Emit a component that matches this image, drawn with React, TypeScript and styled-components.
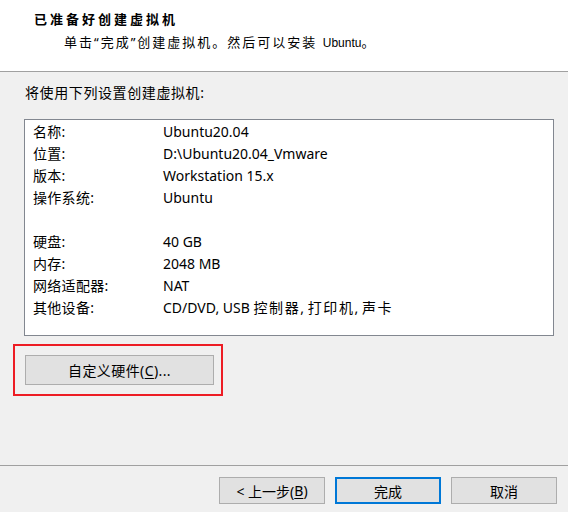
import React from 'react';
import styled, { createGlobalStyle } from 'styled-components';

const GlobalStyle = createGlobalStyle`
    html, body {
        margin: 0;
        padding: 0;
        background: #f0f0f0;
    }
    body {
        font-family: "Noto Sans", "Noto Sans CJK SC", sans-serif;
        color: #000;
    }
`;

interface ISetting {
    label: string;
    value: React.ReactNode;
}

// CJK runs are a bit wider in the original than Noto's 1em advance
const Han = styled.span<{ $ls?: number }>`
    letter-spacing: ${p => p.$ls ?? 0.6}px;
`;

const settings: (ISetting | null)[] = [
    { label: '名称:', value: 'Ubuntu20.04' },
    { label: '位置:', value: 'D:\\Ubuntu20.04_Vmware' },
    { label: '版本:', value: 'Workstation 15.x' },
    { label: '操作系统:', value: 'Ubuntu' },
    null,
    { label: '硬盘:', value: '40 GB' },
    { label: '内存:', value: '2048 MB' },
    { label: '网络适配器:', value: 'NAT' },
    {
        label: '其他设备:',
        value: (
            <>
                CD/DVD, USB <Han $ls={1.6}>控制器</Han>, <Han $ls={1.6}>打印机</Han>, <Han $ls={1.6}>声卡</Han>
            </>
        ),
    },
];

const Window = styled.div`
    display: flex;
    flex-direction: column;
    width: 568px;
    height: 512px;
    overflow: hidden;
    font-size: 14px;
`;

const Header = styled.div`
    height: 71px;
    background: #fff;
    border-bottom: 1px solid #a0a0a0;
`;

const Title = styled.div`
    padding: 8px 0 0 34px;
    height: 22px;
    line-height: 22px;
    font-size: 13px;
    font-weight: 700;
    letter-spacing: 3px;
`;

const Subtitle = styled.div`
    padding: 1px 0 0 64px;
    height: 22px;
    line-height: 22px;
    font-size: 13px;
    letter-spacing: 2px;
`;

const SmallLatin = styled.span`
    font-family: "Liberation Sans", Arial, sans-serif;
    font-size: 12px;
    letter-spacing: 0;
`;

const Main = styled.div`
    flex: 1;
    display: flex;
    flex-direction: column;
    padding: 10px 14px 0 24px;
`;

const Intro = styled.div`
    padding-left: 1px;
    height: 22px;
    line-height: 22px;
    margin-bottom: 15px;
`;

const SummaryBox = styled.div`
    height: 214px;
    background: #fff;
    border: 1px solid #828790;
    padding: 1px 0 0 8px;
`;

const Row = styled.div`
    display: grid;
    grid-template-columns: 130px 1fr;
    height: 22px;
    line-height: 22px;
    white-space: nowrap;
`;

const Label = styled.span`
    letter-spacing: 0.3px;
`;

const Highlight = styled.div`
    box-sizing: border-box;
    align-self: flex-start;
    margin: 8px 0 0 -11px;
    width: 210px;
    height: 52px;
    border: 2px solid #ed1c24;
    padding: 9px 0 0 10px;
`;

const Button = styled.button<{ $primary?: boolean }>`
    box-sizing: border-box;
    display: flex;
    align-items: center;
    justify-content: center;
    margin: 0;
    padding: 0;
    background: #e1e1e1;
    border: ${p => (p.$primary ? '2px solid #0078d7' : '1px solid #adadad')};
    font-family: "Noto Sans", "Noto Sans CJK SC", sans-serif;
    font-size: 14px;
    color: #000;
    white-space: pre;

    u {
        text-underline-offset: 2px;
    }
`;

const CustomButton = styled(Button)`
    width: 189px;
    height: 30px;
    letter-spacing: 0.4px;
`;

const Footer = styled.div`
    height: 47px;
    border-top: 1px solid #a0a0a0;
    display: flex;
    justify-content: flex-end;
    gap: 10px;
    padding: 11px 11px 0 0;
    box-sizing: border-box;
`;

const FooterButton = styled(Button)`
    width: 106px;
    height: 27px;
`;

const App = () => {
    return (
        <Window>
            <GlobalStyle />
            <Header>
                <Title>已准备好创建虚拟机</Title>
                <Subtitle>
                    单击“完成”创建虚拟机。然后可以安装 <SmallLatin>Ubuntu</SmallLatin>。
                </Subtitle>
            </Header>
            <Main>
                <Intro>
                    <Han>将使用下列设置创建虚拟机</Han>:
                </Intro>
                <SummaryBox>
                    {settings.map((s, i) => (
                        <Row key={i}>
                            <Label>{s ? s.label : ''}</Label>
                            <span>{s ? s.value : ''}</span>
                        </Row>
                    ))}
                </SummaryBox>
                <Highlight>
                    <CustomButton>自定义硬件(<u>C</u>)...</CustomButton>
                </Highlight>
            </Main>
            <Footer>
                <FooterButton>&lt; 上一步(<u>B</u>)</FooterButton>
                <FooterButton $primary>完成</FooterButton>
                <FooterButton>取消</FooterButton>
            </Footer>
        </Window>
    );
};

export default App;
